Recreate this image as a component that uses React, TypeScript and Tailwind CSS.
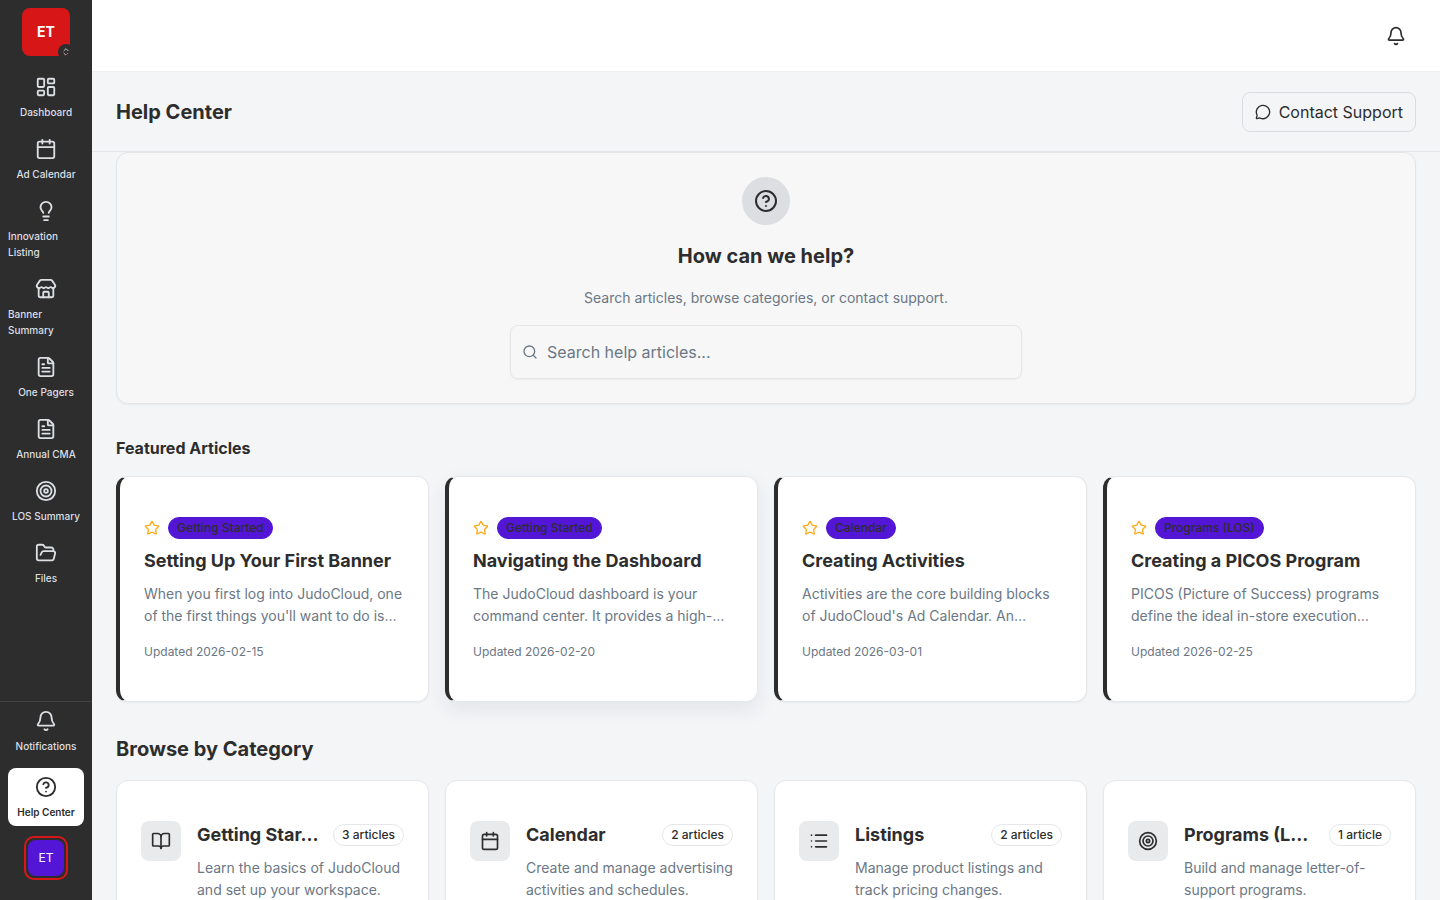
import {
  Bell,
  BookOpen,
  Calendar,
  ChevronsUpDown,
  CircleHelp,
  FileText,
  FolderOpen,
  LayoutDashboard,
  Lightbulb,
  List,
  MessageCircle,
  Search,
  Star,
  Store,
  Target,
  type LucideIcon,
} from "lucide-react";

const navItems = [
  { label: "Dashboard", icon: LayoutDashboard },
  { label: "Ad Calendar", icon: Calendar },
  { label: "Innovation Listing", icon: Lightbulb },
  { label: "Banner Summary", icon: Store },
  { label: "One Pagers", icon: FileText },
  { label: "Annual CMA", icon: FileText },
  { label: "LOS Summary", icon: Target },
  { label: "Files", icon: FolderOpen },
];

const articles = [
  {
    category: "Getting Started",
    title: "Setting Up Your First Banner",
    lines: ["When you first log into JudoCloud, one", "of the first things you'll want to do is…"],
    updated: "2026-02-15",
  },
  {
    category: "Getting Started",
    title: "Navigating the Dashboard",
    lines: ["The JudoCloud dashboard is your", "command center. It provides a high-…"],
    updated: "2026-02-20",
    raised: true,
  },
  {
    category: "Calendar",
    title: "Creating Activities",
    lines: ["Activities are the core building blocks", "of JudoCloud's Ad Calendar. An…"],
    updated: "2026-03-01",
  },
  {
    category: "Programs (LOS)",
    title: "Creating a PICOS Program",
    lines: ["PICOS (Picture of Success) programs", "define the ideal in-store execution…"],
    updated: "2026-02-25",
  },
];

const categories = [
  {
    title: "Getting Star…",
    count: "3 articles",
    icon: BookOpen,
    lines: ["Learn the basics of JudoCloud", "and set up your workspace."],
  },
  {
    title: "Calendar",
    count: "2 articles",
    icon: Calendar,
    lines: ["Create and manage advertising", "activities and schedules."],
  },
  {
    title: "Listings",
    count: "2 articles",
    icon: List,
    lines: ["Manage product listings and", "track pricing changes."],
  },
  {
    title: "Programs (L…",
    count: "1 article",
    icon: Target,
    lines: ["Build and manage letter-of-", "support programs."],
  },
];

function NavItem({ label, icon: Icon, active }: { label: string; icon: LucideIcon; active?: boolean }) {
  return (
    <a
      className={`flex flex-col items-center gap-1.5 rounded-lg pt-2 pb-1.5 text-[10px] leading-4 ${
        active ? "bg-white font-semibold text-[#2d2d2d]" : "font-medium text-[#dcdfe4]"
      }`}
    >
      <Icon size={22} strokeWidth={2} />
      <span>{label}</span>
    </a>
  );
}

function Sidebar() {
  return (
    <aside className="flex w-[92px] shrink-0 flex-col bg-[#2d2d2d]">
      <div className="flex justify-center pt-2 pb-3">
        <div className="relative flex size-12 items-center justify-center overflow-hidden rounded-lg bg-[#d71717] text-sm font-bold text-white">
          ET
          <div className="absolute -right-1 -bottom-1 flex size-4 items-center justify-center rounded-full bg-[#2d2d2d]">
            <ChevronsUpDown size={10} className="text-[#dcdfe4]" />
          </div>
        </div>
      </div>
      <nav className="flex flex-1 flex-col gap-1 px-2">
        {navItems.map((item) => (
          <NavItem key={item.label} {...item} />
        ))}
      </nav>
      <div className="flex flex-col gap-2 border-t border-[#424242] px-2 pb-5">
        <NavItem label="Notifications" icon={Bell} />
        <NavItem label="Help Center" icon={CircleHelp} active />
        <div className="mt-0.5 flex size-11 items-center justify-center self-center rounded-[10px] border-2 border-[#d71717]">
          <div className="flex size-9 items-center justify-center rounded-lg bg-[#5316d6] text-xs text-white">ET</div>
        </div>
      </div>
    </aside>
  );
}

function Hero() {
  return (
    <section className="flex flex-col items-center rounded-xl border border-[#e3e5e8] bg-[#f7f7f8] p-6 shadow-xs">
      <div className="flex size-12 items-center justify-center rounded-full bg-[#dddee2]">
        <CircleHelp size={24} />
      </div>
      <h2 className="mt-4 text-xl leading-[30px] font-bold">How can we help?</h2>
      <p className="mt-4 text-sm leading-[22px] text-[#6b7785]">
        Search articles, browse categories, or contact support.
      </p>
      <div className="mt-4 flex h-[54px] w-[512px] items-center gap-[9px] rounded-lg border border-[#e3e5e8] pr-3 pl-[11px] text-[#6b7785] shadow-xs">
        <Search size={16} />
        <span className="text-base">Search help articles...</span>
      </div>
    </section>
  );
}

function ArticleCard({ category, title, lines, updated, raised }: (typeof articles)[number]) {
  return (
    <article
      className={`h-[226px] rounded-xl border border-l-4 border-[#e5e7ea] border-l-[#2d2d2d] bg-white px-6 pt-10 ${
        raised ? "shadow-[0_8px_20px_rgba(30,40,80,0.08)]" : "shadow-xs"
      }`}
    >
      <div className="flex h-[22px] items-center gap-2">
        <Star size={16} className="text-[#ffab1a]" />
        <span className="rounded-full border border-[#5316d6] bg-[#5316d6] px-2 py-0.5 text-xs font-medium">{category}</span>
      </div>
      <h3 className="mt-2 text-lg leading-7 font-bold">{title}</h3>
      <p className="mt-2 text-sm leading-[22px] whitespace-nowrap text-[#6b7785]">
        {lines[0]}
        <br />
        {lines[1]}
      </p>
      <p className="mt-4 text-xs leading-[18px] text-[#6b7785]">Updated {updated}</p>
    </article>
  );
}

function CategoryCard({ title, count, icon: Icon, lines }: (typeof categories)[number]) {
  return (
    <article className="flex h-[200px] items-start gap-4 rounded-xl border border-[#e5e7ea] bg-white px-6 pt-10 shadow-xs">
      <div className="flex size-10 shrink-0 items-center justify-center rounded-lg bg-[#e9eaeb]">
        <Icon size={20} />
      </div>
      <div className="min-w-0 flex-1">
        <div className="flex items-center justify-between gap-2">
          <h3 className="text-lg leading-7 font-bold whitespace-nowrap">{title}</h3>
          <span className="shrink-0 rounded-full border border-[#e5e7ea] px-2 py-0.5 text-xs font-medium">{count}</span>
        </div>
        <p className="mt-2 text-sm leading-[22px] whitespace-nowrap text-[#6b7785]">
          {lines[0]}
          <br />
          {lines[1]}
        </p>
      </div>
    </article>
  );
}

export default function App() {
  return (
    <div className="flex h-[900px] w-[1440px] overflow-hidden bg-[#f4f5f7] font-['Inter',sans-serif] text-[#2d2d2d]">
      <Sidebar />
      <div className="flex min-w-0 flex-1 flex-col">
        <header className="flex h-[72px] shrink-0 items-center justify-end border-b border-[#eceef0] bg-white pr-[34px]">
          <Bell size={20} />
        </header>
        <div className="flex h-20 shrink-0 items-center justify-between border-b border-[#e5e7ea] px-6">
          <h1 className="text-xl font-bold">Help Center</h1>
          <button className="flex h-10 items-center gap-2 rounded-lg border border-[#d9dce0] px-3 text-base">
            <MessageCircle size={16} />
            Contact Support
          </button>
        </div>
        <main className="min-h-0 flex-1 overflow-hidden px-6">
          <Hero />
          <h2 className="mt-8 text-base leading-6 font-bold">Featured Articles</h2>
          <div className="mt-4 grid grid-cols-4 gap-4">
            {articles.map((article) => (
              <ArticleCard key={article.title} {...article} />
            ))}
          </div>
          <h2 className="mt-8 text-xl leading-[30px] font-bold">Browse by Category</h2>
          <div className="mt-4 grid grid-cols-4 gap-4">
            {categories.map((category) => (
              <CategoryCard key={category.title} {...category} />
            ))}
          </div>
        </main>
      </div>
    </div>
  );
}
